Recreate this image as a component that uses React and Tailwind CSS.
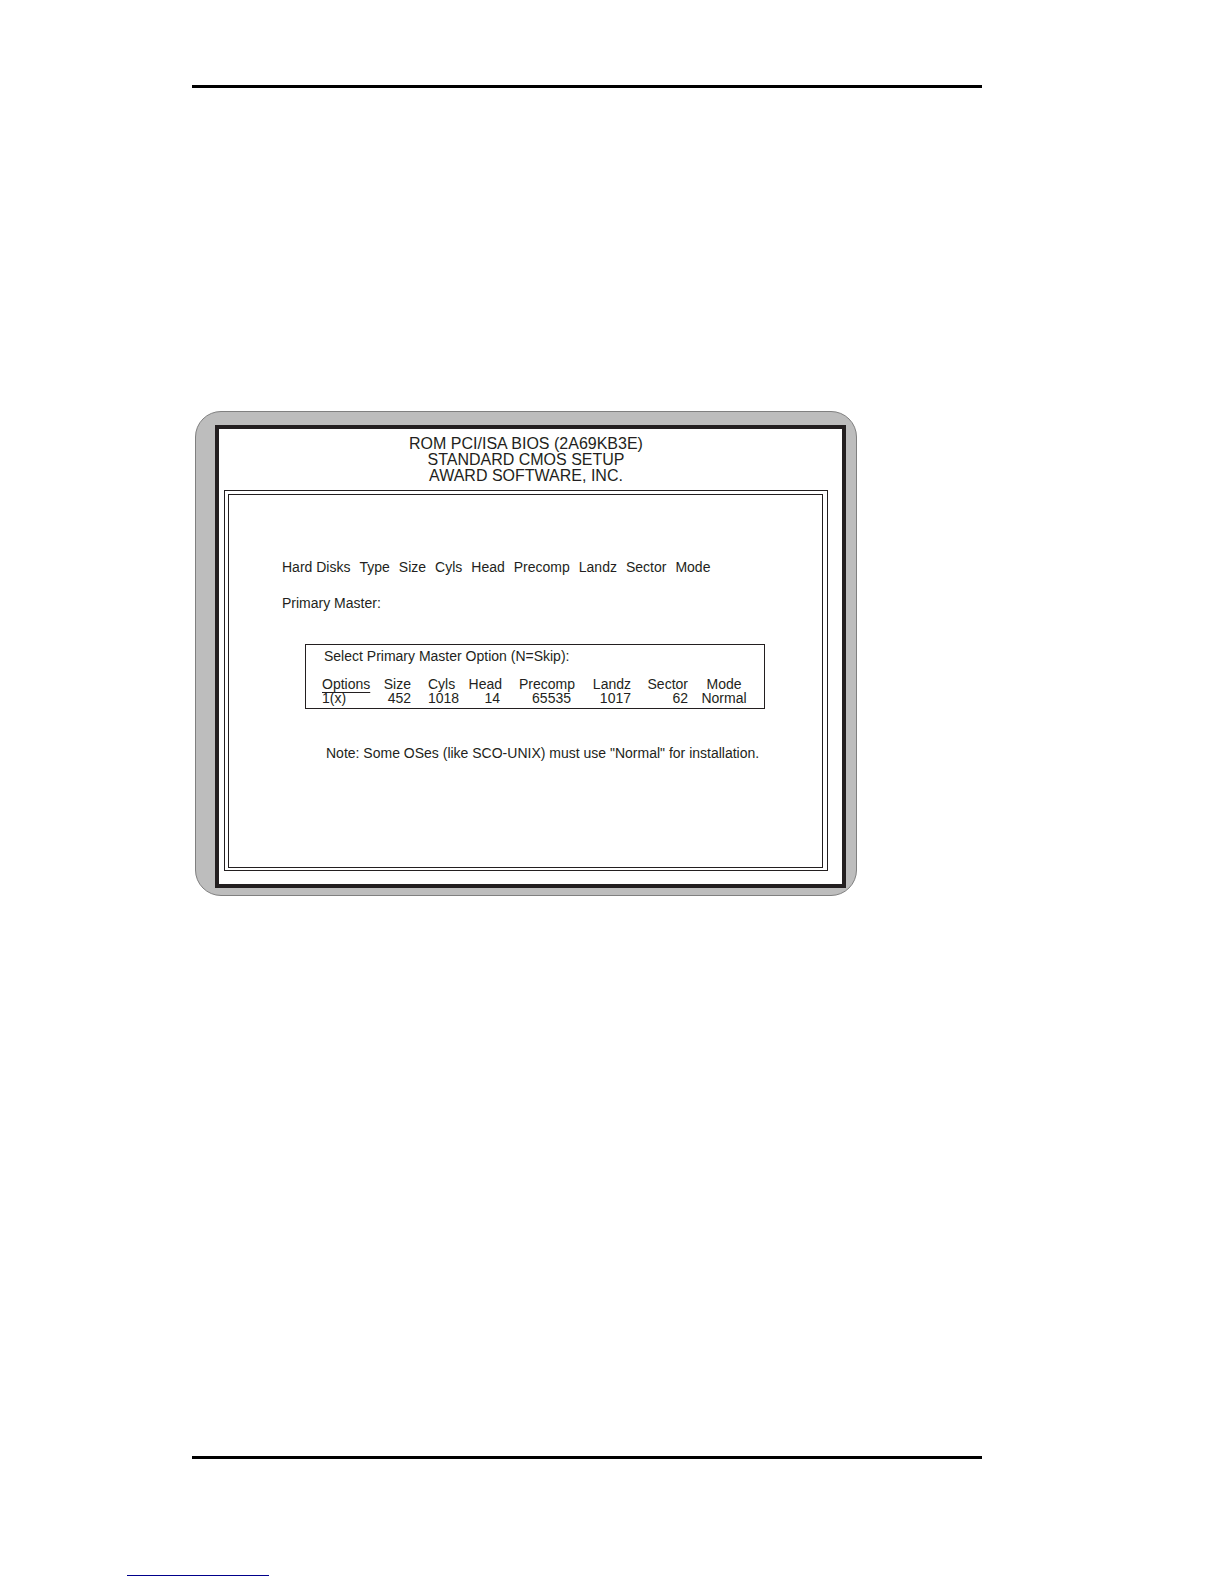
const diskColumns = ['Hard Disks', 'Type', 'Size', 'Cyls', 'Head', 'Precomp', 'Landz', 'Sector', 'Mode'];

// Columns of the option table, with the value of the only option
const options = [
  { name: 'Options', value: '1(x)', col: 'w-[49px]', align: 'text-left', underline: true },
  { name: 'Size', value: '452', col: 'w-[40px]', align: 'text-right' },
  { name: 'Cyls', value: '1018', col: 'w-[48px]', align: 'text-left pl-[17px]' },
  { name: 'Head', value: '14', col: 'w-[43px]', align: 'text-right', inset: 'pr-[2px]' },
  { name: 'Precomp', value: '65535', col: 'w-[73px]', align: 'text-right', inset: 'pr-1' },
  { name: 'Landz', value: '1017', col: 'w-[56px]', align: 'text-right' },
  { name: 'Sector', value: '62', col: 'w-[57px]', align: 'text-right' },
  { name: 'Mode', value: 'Normal', col: 'w-[72px]', align: 'text-center' }
];

const HardDisks = () => (
  <table className="ml-[53px] border-collapse whitespace-nowrap text-left">
    <thead>
      <tr>
        {diskColumns.map((name) => (
          <th key={name} scope="col" className="p-0 pr-[9px] font-normal">{name}</th>
        ))}
      </tr>
    </thead>
    <tbody>
      <tr>
        <th scope="row" colSpan={9} className="p-0 pt-[22px] font-normal">Primary Master:</th>
      </tr>
    </tbody>
  </table>
);

const OptionTable = () => (
  <div className="ml-[76px] mt-[34px] max-w-[460px] border border-[#231f20] pt-1 pb-[3px] pl-4">
    <table className="w-[438px] table-fixed border-collapse whitespace-nowrap">
      <caption className="pb-[14px] pl-[2px] text-left">Select Primary Master Option (N=Skip):</caption>
      <colgroup>
        {options.map((o) => <col key={o.name} className={o.col} />)}
      </colgroup>
      <thead>
        <tr>
          {options.map((o) => (
            <th key={o.name} scope="col" className={`p-0 font-normal ${o.align}`}>
              {o.underline ? (
                <span className="underline underline-offset-[3px] [text-decoration-skip-ink:none]">{o.name}</span>
              ) : o.name}
            </th>
          ))}
        </tr>
      </thead>
      <tbody>
        <tr>
          {options.map((o) => (
            <td key={o.name} className={`p-0 ${o.align} ${o.inset || ''}`}>{o.value}</td>
          ))}
        </tr>
      </tbody>
    </table>
  </div>
);

const BiosScreen = () => (
  <section className="ml-[3px] w-full max-w-[662px] rounded-[26px] border border-[#808080] bg-[#bdbdbd] pt-[13px] pr-[10px] pb-[7px] pl-[19px]">
    <div className="border-4 border-[#231f20] bg-white pt-[7px] pr-[14px] pb-[13px] pl-[5px]">
      <h1 className="text-center text-[16px] leading-[16px]">
        ROM PCI/ISA BIOS (2A69KB3E)<br />
        STANDARD CMOS SETUP<br />
        AWARD SOFTWARE, INC.
      </h1>

      {/* Double line frame */}
      <div className="mt-[6px] border border-[#231f20] pt-[3px] pr-1 pb-[2px] pl-[3px]">
        <div className="border border-[#231f20] pt-[65px] pb-[107px] text-[14px] leading-[14px]">
          <HardDisks />
          <OptionTable />
          <p className="ml-[97px] mt-[37px]">
            Note: Some OSes (like SCO-UNIX) must use "Normal" for installation.
          </p>
        </div>
      </div>
    </div>
  </section>
);

const App = () => {
  return (
    <div className="flex min-h-screen flex-col bg-white pt-[85px] pb-2 font-['Liberation_Sans',Arial,sans-serif] text-[#231f20]">
      <main className="flex flex-1 flex-col pr-[242px] pl-[192px]">
        <hr className="border-t-[3px] border-black" />
        <div className="mt-[323px] mb-10">
          <BiosScreen />
        </div>
        <hr className="mt-auto border-t-[3px] border-black" />
      </main>
      <footer className="pt-[116px] pl-[127px]">
        <div className="h-px w-[142px] bg-[#00008b]" />
      </footer>
    </div>
  );
};

export default App;
